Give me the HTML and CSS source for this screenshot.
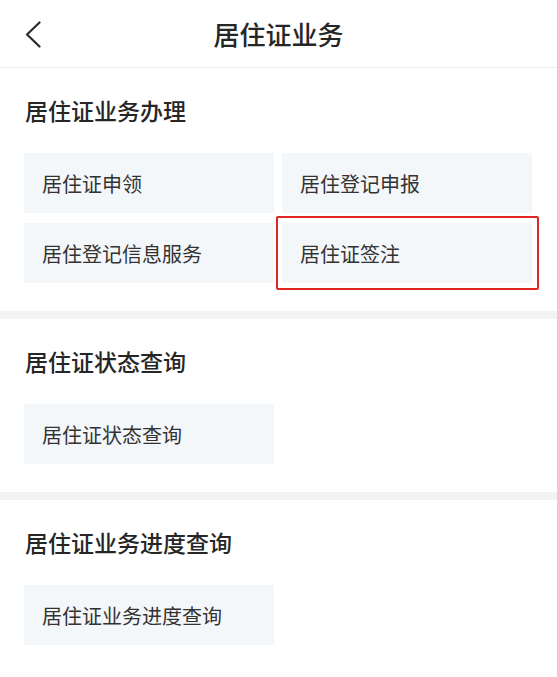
FILE: index.html
```html
<!DOCTYPE html>
<html lang="zh-CN">
<head>
  <meta charset="UTF-8">
  <meta name="viewport" content="width=device-width, initial-scale=1.0">
  <title>居住证业务</title>
  <link rel="stylesheet" href="styles.css">
</head>
<body>
  <div class="page">
    <div class="header">
      <span class="back">
        <svg width="16" height="28" viewBox="0 0 16 28">
          <polyline points="14.5,1.5 2,13.5 14.5,25.5" fill="none" stroke="#2b2b2b" stroke-width="2.2" stroke-linecap="round" stroke-linejoin="round"/>
        </svg>
      </span>
      <h1>居住证业务</h1>
    </div>

    <div class="section">
      <h2>居住证业务办理</h2>
      <div class="grid">
        <div class="tile">居住证申领</div>
        <div class="tile">居住登记申报</div>
        <div class="tile">居住登记信息服务</div>
        <div class="tile marked">居住证签注</div>
      </div>
    </div>

    <div class="section">
      <h2>居住证状态查询</h2>
      <div class="grid">
        <div class="tile">居住证状态查询</div>
      </div>
    </div>

    <div class="section last">
      <h2>居住证业务进度查询</h2>
      <div class="grid">
        <div class="tile">居住证业务进度查询</div>
      </div>
    </div>
  </div>
</body>
</html>
```

FILE: styles.css
```css
body, html {
  font-family: 'Noto Sans CJK SC', 'Noto Sans', sans-serif;
  background-color: #fff;
  margin: 0;
  padding: 0;
  color: #333;
}

.page {
  width: 557px;
  overflow: hidden;
}

.header {
  position: relative;
  height: 67px;
  border-bottom: 1px solid #eeeeee;
  display: flex;
  align-items: center;
  justify-content: center;
}

.header h1 {
  margin: 0;
  font-size: 26px;
  font-weight: 500;
  color: #262626;
  line-height: 34px;
}

.back {
  position: absolute;
  left: 25px;
  top: 21px;
  display: block;
  height: 28px;
}

.section {
  padding: 26px 25px 28px 24px;
  border-bottom: 8px solid #f3f3f3;
}

.section.last {
  border-bottom: none;
}

.section h2 {
  margin: 0 0 27px 1px;
  font-size: 23px;
  font-weight: 500;
  line-height: 32px;
  color: #262626;
}

.grid {
  display: grid;
  grid-template-columns: 1fr 1fr;
  column-gap: 8px;
  row-gap: 10px;
}

.tile {
  position: relative;
  height: 60px;
  background-color: #f4f7fa;
  display: flex;
  align-items: center;
  padding-left: 18px;
  font-size: 20px;
  color: #333;
}

/* red highlight frame around the chosen item */
.tile.marked::after {
  content: '';
  position: absolute;
  left: -6px;
  right: -7px;
  top: -7px;
  bottom: -7px;
  border: 2px solid #e0261f;
  border-radius: 2px;
}
```
